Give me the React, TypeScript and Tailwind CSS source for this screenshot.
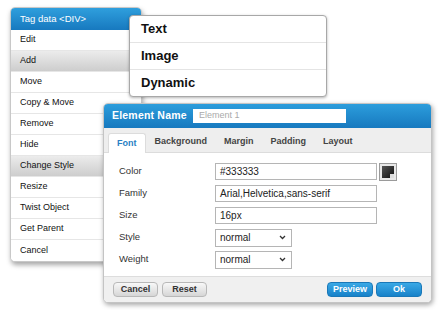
import React from "react";

const font = { fontFamily: '"Liberation Sans", Arial, sans-serif' };

const menuItems = [
  "Edit",
  "Add",
  "Move",
  "Copy & Move",
  "Remove",
  "Hide",
  "Change Style",
  "Resize",
  "Twist Object",
  "Get Parent",
  "Cancel",
];
const highlighted = new Set(["Add", "Change Style"]);

function Chevron() {
  return (
    <svg width="7" height="5" viewBox="0 0 7 5" className="mr-[5px]">
      <path d="M1 1 L3.5 3.5 L6 1" fill="none" stroke="#333" strokeWidth="1.3" />
    </svg>
  );
}

function Field({ label, children }: { label: string; children: React.ReactNode }) {
  return (
    <div className="flex items-center h-[17px]">
      <div className="w-[96px] text-[9.5px] text-[#333]">{label}</div>
      {children}
    </div>
  );
}

export default function App() {
  return (
    <div className="relative w-[440px] h-[310px] bg-white overflow-hidden" style={font}>
      {/* Context menu */}
      <div className="absolute left-[10px] top-[7px] w-[132px] rounded-[5px] bg-white border border-[#c8c8c8] shadow-[1px_3px_5px_rgba(0,0,0,0.35)] overflow-hidden">
        <div className="h-[22px] flex items-center pl-[9px] text-[9.5px] text-white bg-gradient-to-b from-[#2f9fdd] to-[#1779bf]">
          Tag data &lt;DIV&gt;
        </div>
        {menuItems.map((m, i) => (
          <div
            key={m}
            className={
              "h-[21px] flex items-center pl-[9px] text-[9px] text-[#111] " +
              (i < menuItems.length - 1 ? "border-b border-[#e6e6e6] " : "") +
              (highlighted.has(m) ? "bg-gradient-to-b from-[#ececec] to-[#cdcdcd]" : "bg-white")
            }
          >
            {m}
          </div>
        ))}
      </div>

      {/* Submenu */}
      <div className="absolute left-[129px] top-[15px] w-[198px] h-[82px] rounded-[4px] bg-white border border-[#a8a8a8] shadow-[0_1px_3px_rgba(0,0,0,0.3)] flex flex-col">
        {["Text", "Image", "Dynamic"].map((t, i) => (
          <div
            key={t}
            className={
              "flex-1 flex items-center pl-[11px] text-[13px] font-bold text-[#111] " +
              (i < 2 ? "border-b border-[#e4e4e4]" : "")
            }
          >
            {t}
          </div>
        ))}
      </div>

      {/* Dialog */}
      <div className="absolute left-[103px] top-[103px] w-[329px] h-[200px] rounded-[5px] bg-white border border-[#c4c4c4] shadow-[1px_2px_5px_rgba(0,0,0,0.35)] overflow-hidden flex flex-col">
        <div className="h-[24px] flex items-center pl-[8px] bg-gradient-to-b from-[#2c9ddc] to-[#1779bf]">
          <div className="w-[81px] text-[10.5px] font-bold text-white tracking-[0.2px]">Element Name</div>
          <div className="w-[153px] h-[14px] bg-white flex items-center pl-[6px] text-[9px] text-[#aaa]">
            Element 1
          </div>
        </div>
        <div className="h-[25px] bg-[#eeeeee] border-b border-[#dcdcdc] flex items-end pl-[4px] gap-[1px]">
          <div className="h-[20px] px-[8px] flex items-center bg-white rounded-t-[3px] border border-b-0 border-[#dcdcdc] text-[9px] font-bold text-[#2a7fc4] -mb-px">
            Font
          </div>
          {["Background", "Margin", "Padding", "Layout"].map((t) => (
            <div key={t} className="h-[20px] px-[8px] flex items-center text-[9px] font-bold text-[#444]">
              {t}
            </div>
          ))}
        </div>
        <div className="flex-1 flex flex-col gap-[5px] pt-[10px] pl-[15px]">
          <Field label="Color">
            <div className="w-[162px] h-[17px] border border-[#b5b5b5] flex items-center pl-[4px] text-[10px] text-[#222]">
              #333333
            </div>
            <div className="ml-[2px] w-[18px] h-[18px] border border-[#9a9a9a] bg-[#e8e8e8] p-[2px]">
              <div className="relative w-full h-full bg-gradient-to-br from-[#555] to-[#111]">
                <div className="absolute right-0 bottom-0 w-[4px] h-[4px] bg-[#ddd]" />
              </div>
            </div>
          </Field>
          <Field label="Family">
            <div className="w-[162px] h-[17px] border border-[#b5b5b5] flex items-center pl-[4px] text-[10px] text-[#222]">
              Arial,Helvetica,sans-serif
            </div>
          </Field>
          <Field label="Size">
            <div className="w-[162px] h-[17px] border border-[#b5b5b5] flex items-center pl-[4px] text-[10px] text-[#222]">
              16px
            </div>
          </Field>
          <Field label="Style">
            <div className="w-[77px] h-[18px] border border-[#b5b5b5] flex items-center justify-between pl-[4px] text-[10px] text-[#222]">
              normal
              <Chevron />
            </div>
          </Field>
          <Field label="Weight">
            <div className="w-[77px] h-[18px] border border-[#b5b5b5] flex items-center justify-between pl-[4px] text-[10px] text-[#222]">
              normal
              <Chevron />
            </div>
          </Field>
        </div>
        <div className="h-[26px] bg-[#f0f0f0] border-t border-[#dddddd] flex items-center px-[9px]">
          <div className="flex gap-[4px]">
            {["Cancel", "Reset"].map((b) => (
              <div
                key={b}
                className="w-[45px] h-[15px] rounded-[4px] border border-[#b8b8b8] bg-gradient-to-b from-[#f8f8f8] to-[#d6d6d6] flex items-center justify-center text-[9px] font-bold text-[#333]"
              >
                {b}
              </div>
            ))}
          </div>
          <div className="ml-auto flex gap-[3px]">
            {["Preview", "Ok"].map((b) => (
              <div
                key={b}
                className="w-[46px] h-[15px] rounded-[4px] border border-[#1a78b8] bg-gradient-to-b from-[#3aa9e6] to-[#1782c9] flex items-center justify-center text-[9px] font-bold text-white"
              >
                {b}
              </div>
            ))}
          </div>
        </div>
      </div>
    </div>
  );
}
